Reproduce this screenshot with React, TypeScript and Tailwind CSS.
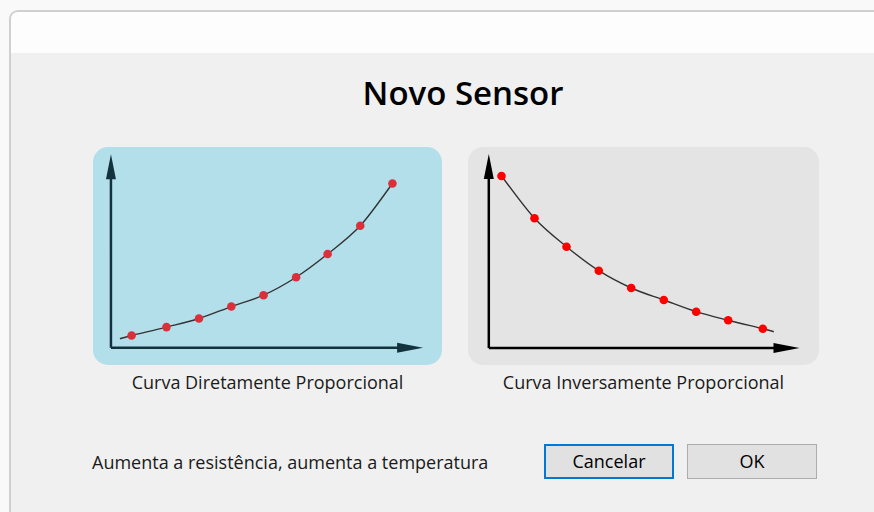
import React from 'react';

type Pt = [number, number];

// catmull-rom -> cubic bezier, keeps the curve passing through every point
function smoothPath(pts: Pt[]) {
  let d = `M${pts[0][0]},${pts[0][1]}`;
  for (let i = 0; i < pts.length - 1; i++) {
    const p0 = pts[i - 1] || pts[i];
    const p1 = pts[i];
    const p2 = pts[i + 1];
    const p3 = pts[i + 2] || p2;
    const c1x = p1[0] + (p2[0] - p0[0]) / 6;
    const c1y = p1[1] + (p2[1] - p0[1]) / 6;
    const c2x = p2[0] - (p3[0] - p1[0]) / 6;
    const c2y = p2[1] - (p3[1] - p1[1]) / 6;
    d += ` C${c1x},${c1y} ${c2x},${c2y} ${p2[0]},${p2[1]}`;
  }
  return d;
}

const directPts: Pt[] = [
  [38.7, 188.7], [73.7, 180.3], [106.3, 171.7], [138.7, 159.7], [171, 148.3],
  [203.7, 130.3], [235.3, 107], [268, 78.7], [300.3, 36.3],
];

const inversePts: Pt[] = [
  [33, 29], [66, 71.3], [98, 99.7], [130.3, 123.7], [162.7, 141],
  [195.3, 153], [227.7, 164.7], [259.7, 173.3], [294.3, 181.7],
];

function Chart({ axisX, pts, start, end, axis, dot }: {
  axisX: number;
  pts: Pt[];
  start?: Pt;
  end?: Pt;
  axis: string;
  dot: string;
}) {
  const line = [...(start ? [start] : []), ...pts, ...(end ? [end] : [])];
  return (
    <svg width="100%" height="100%" viewBox="0 0 350 218">
      <line x1={axisX} y1={28} x2={axisX} y2={201} stroke={axis} strokeWidth={2.5} />
      <line x1={axisX} y1={201} x2={312} y2={201} stroke={axis} strokeWidth={2.5} />
      <polygon points={`${axisX},7 ${axisX - 5},32 ${axisX + 5},32`} fill={axis} />
      <polygon points={`331,201 305,196 305,206`} fill={axis} />
      <path d={smoothPath(line)} fill="none" stroke="#333" strokeWidth={1.4} />
      {pts.map((p, i) => (
        <circle key={i} cx={p[0]} cy={p[1]} r={4.3} fill={dot} />
      ))}
    </svg>
  );
}

export default function App() {
  return (
    <div className="w-[874px] h-[512px] bg-[#f9f9f9] pt-[10px] pl-[9px] overflow-hidden" style={{ fontFamily: '"Open Sans", "Noto Sans", sans-serif' }}>
      <div className="h-[520px] border-t-2 border-l-2 border-[#d0d0d0] rounded-tl-[9px] bg-[#f0f0f0] overflow-hidden">
        {/* title bar */}
        <div className="h-[41px] bg-[#fdfdfd]"></div>

        <h1 className="mt-[19px] text-center text-[33px] leading-[42px] font-semibold text-black pl-[41px]">
          Novo Sensor
        </h1>

        <div className="flex gap-[26px] pl-[82px] mt-[33px]">
          <div className="flex flex-col items-center">
            <div className="w-[349px] h-[218px] rounded-[15px] bg-[#b3dfeb]">
              <Chart axisX={18} pts={directPts} start={[27, 192]} axis="#12323d" dot="#dc2f3a" />
            </div>
            <span className="mt-[5px] text-[18px] leading-[24px] text-[#1a1a1a]">Curva Diretamente Proporcional</span>
          </div>
          <div className="flex flex-col items-center">
            <div className="w-[351px] h-[218px] rounded-[15px] bg-[#e4e4e4]">
              <Chart axisX={20.3} pts={inversePts} end={[305.3, 184.7]} axis="#000000" dot="#ff0000" />
            </div>
            <span className="mt-[5px] text-[18px] leading-[24px] text-[#1a1a1a]">Curva Inversamente Proporcional</span>
          </div>
        </div>

        <div className="flex items-center pl-[81px] pr-[57px] mt-[50px]">
          <span className="text-[18px] leading-[24px] text-[#1a1a1a]">Aumenta a resistência, aumenta a temperatura</span>
          <div className="ml-auto flex gap-[13px]">
            <button className="w-[130px] h-[35px] border-2 border-[#0078d7] bg-[#e1e1e1] text-[18px] text-black">
              Cancelar
            </button>
            <button className="w-[130px] h-[35px] border border-[#adadad] bg-[#e1e1e1] text-[18px] text-black">
              OK
            </button>
          </div>
        </div>
      </div>
    </div>
  );
}
